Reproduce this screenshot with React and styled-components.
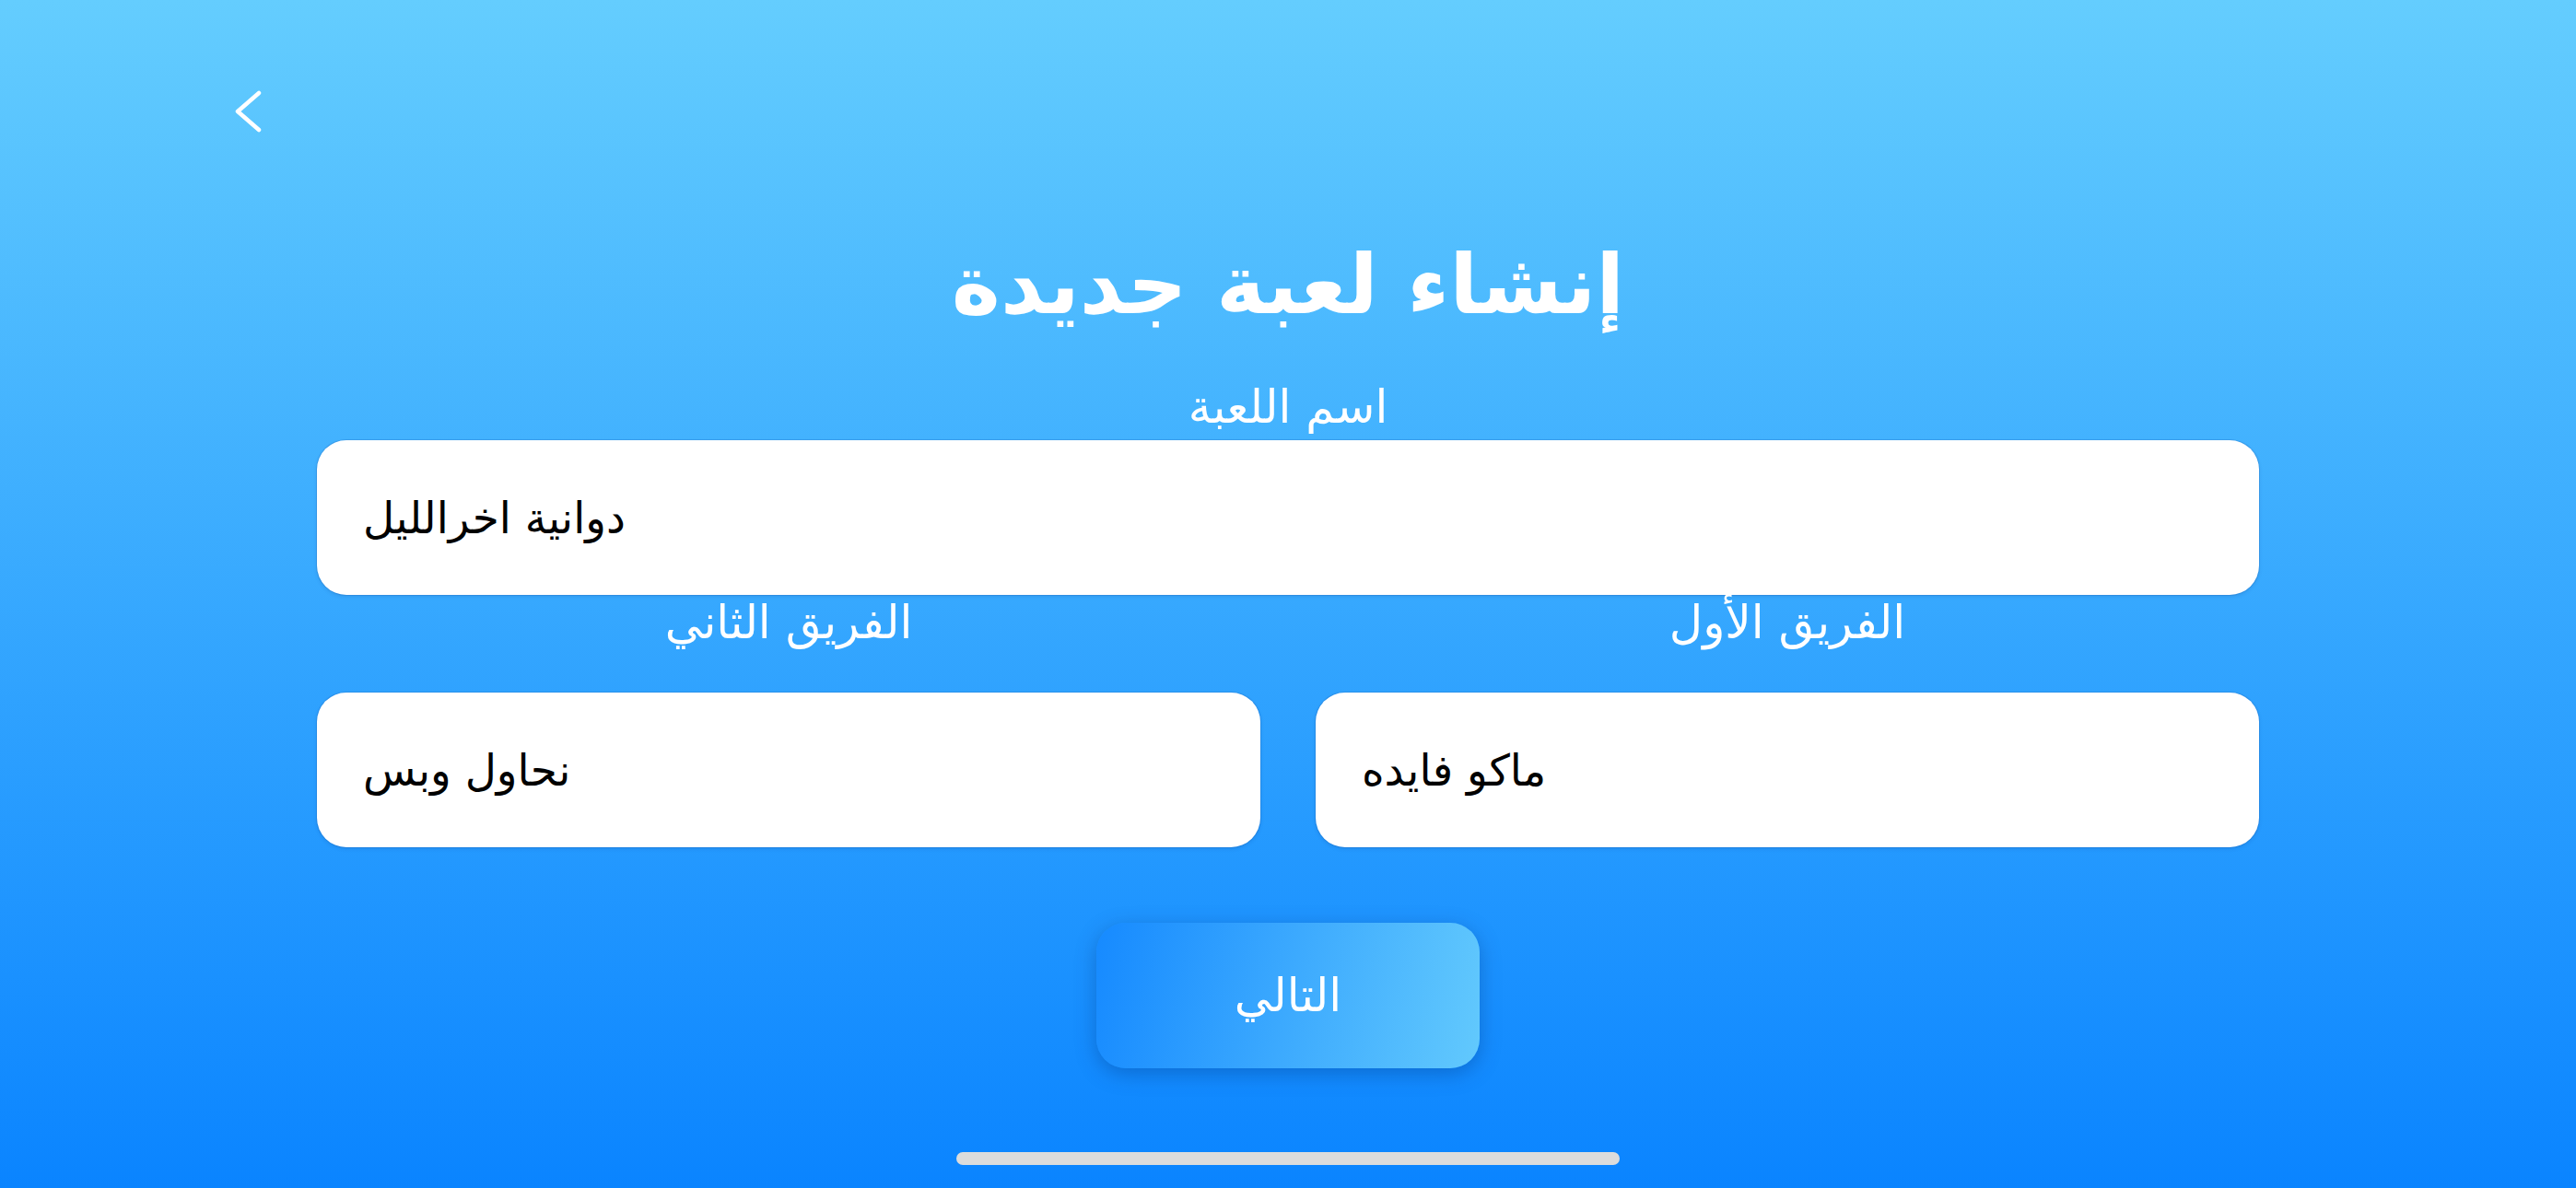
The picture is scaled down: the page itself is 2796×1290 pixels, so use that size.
import React from 'react';
import styled, { createGlobalStyle } from 'styled-components';

const GlobalStyle = createGlobalStyle`
  html, body {
    margin: 0;
    padding: 0;
  }
  body {
    font-family: 'DejaVu Sans', 'Noto Sans', sans-serif;
  }
`;

const Screen = styled.div`
  width: 100vw;
  height: 100vh;
  min-height: 1290px;
  box-sizing: border-box;
  display: flex;
  flex-direction: column;
  align-items: center;
  background: linear-gradient(180deg, #64cdfe 0%, #0a84ff 100%);
  overflow: hidden;
`;

const TopBar = styled.div`
  align-self: stretch;
  display: flex;
  padding: 97px 0 0 252px;
`;

const BackButton = styled.button`
  border: none;
  background: none;
  padding: 0;
  width: 32px;
  height: 48px;
  cursor: pointer;
  display: flex;
`;

const Title = styled.h1`
  margin: 106px 0 0;
  font-size: 90px;
  line-height: 115px;
  font-weight: 700;
  color: #fff;
  text-align: center;
`;

const Form = styled.div`
  width: 2108px;
  display: flex;
  flex-direction: column;
`;

const Label = styled.label`
  display: block;
  text-align: center;
  color: #fff;
  font-size: 50px;
  font-weight: 500;
  line-height: 60px;
  margin-top: ${(p) => p.$top || 0}px;
  margin-bottom: ${(p) => p.$gap || 0}px;
`;

const Input = styled.input`
  box-sizing: border-box;
  width: 100%;
  height: 168px;
  border: none;
  border-radius: 32px;
  background: #fff;
  padding: 0 50px;
  direction: ltr;
  text-align: left;
  font-family: 'DejaVu Sans', sans-serif;
  font-size: 47px;
  color: #000;
  outline: none;
  box-shadow: 0 0 0 1px rgba(20, 80, 160, 0.18), 0 2px 4px rgba(0, 40, 100, 0.12);
`;

const TeamsRow = styled.div`
  display: grid;
  grid-template-columns: 1fr 1fr;
  column-gap: 60px;
  direction: rtl;
`;

const Field = styled.div`
  display: flex;
  flex-direction: column;
`;

const NextButton = styled.button`
  margin-top: 82px;
  width: 416px;
  height: 158px;
  border: none;
  border-radius: 32px;
  background: linear-gradient(100deg, #168aff 0%, #62c9fd 100%);
  box-shadow: 0 6px 22px rgba(0, 50, 120, 0.35);
  color: #fff;
  font-family: 'DejaVu Sans', sans-serif;
  font-size: 50px;
  font-weight: 500;
  cursor: pointer;
`;

const HomeIndicator = styled.div`
  margin-top: auto;
  margin-bottom: 25px;
  width: 720px;
  height: 14px;
  border-radius: 7px;
  background: #dcdcdc;
`;

const ChevronLeft = () => (
  <svg width="32" height="48" viewBox="0 0 32 48" fill="none">
    <path
      d="M29 4 L6 24 L29 44"
      stroke="#fff"
      strokeWidth="4.5"
      strokeLinecap="round"
      strokeLinejoin="round"
    />
  </svg>
);

export default function App() {
  return (
    <>
      <GlobalStyle />
      <Screen>
        <TopBar>
          <BackButton aria-label="رجوع">
            <ChevronLeft />
          </BackButton>
        </TopBar>

        <Title dir="rtl">إنشاء لعبة جديدة</Title>

        <Form>
          <Label $top={46} $gap={6}>اسم اللعبة</Label>
          <Input readOnly defaultValue="دوانية اخراللیل" />

          <TeamsRow>
            <Field>
              <Label $gap={46}>الفريق الأول</Label>
              <Input readOnly defaultValue="ماكو فايده" />
            </Field>
            <Field>
              <Label $gap={46}>الفريق الثاني</Label>
              <Input readOnly defaultValue="نحاول وبس" />
            </Field>
          </TeamsRow>
        </Form>

        <NextButton>التالي</NextButton>

        <HomeIndicator />
      </Screen>
    </>
  );
}
